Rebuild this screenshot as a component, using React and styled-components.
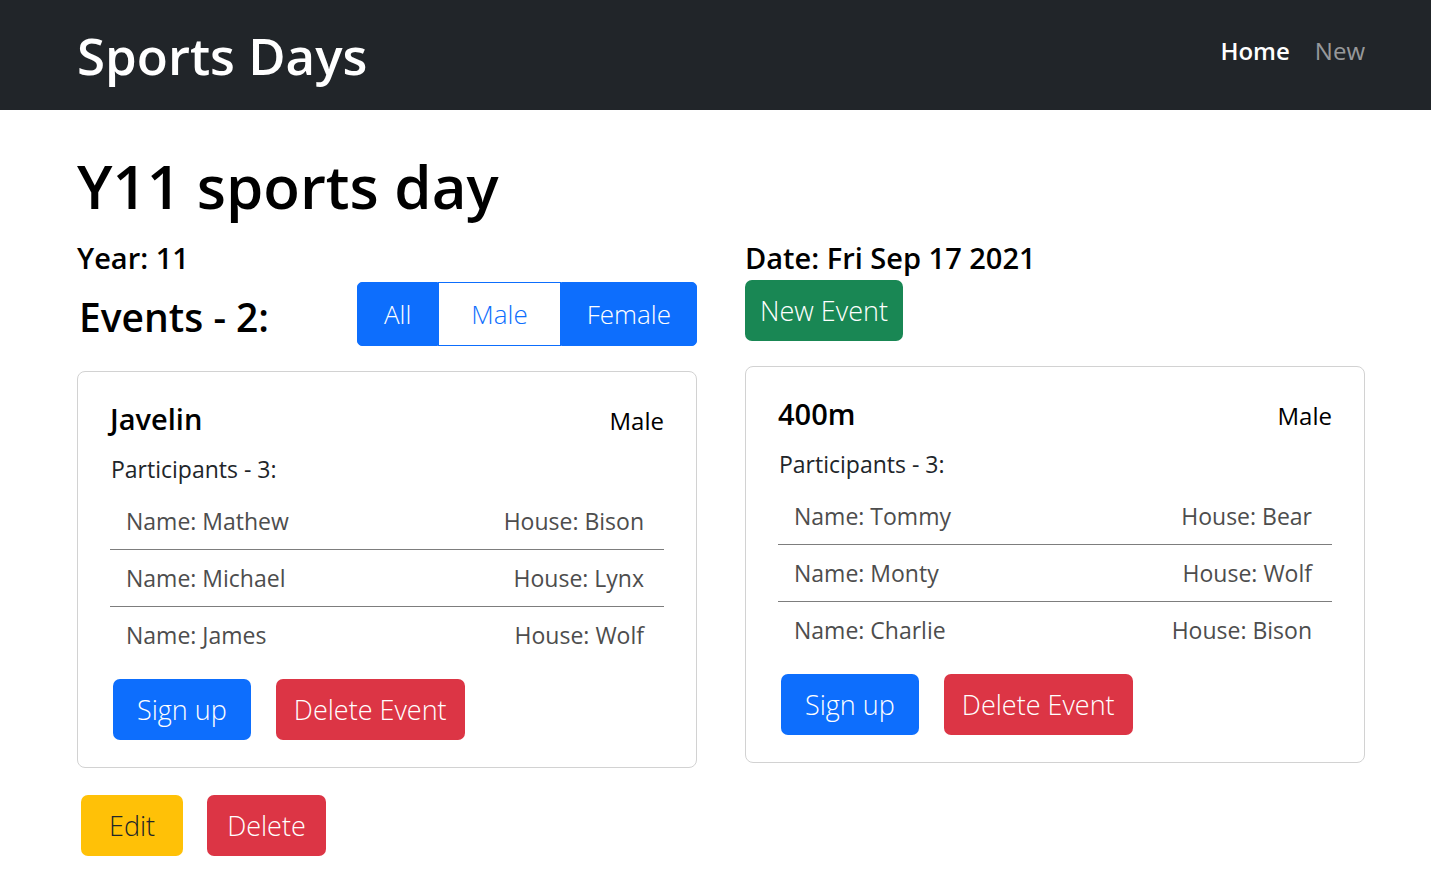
import React from 'react'
import styled, { createGlobalStyle } from 'styled-components'

const GlobalStyles = createGlobalStyle`
  * { box-sizing: border-box; }
  body {
    margin: 0;
    background: #ffffff;
    color: #000000;
    font-family: 'Open Sans', 'Noto Sans', sans-serif;
  }
`

const Navbar = styled.nav`
  background: #212529;
  height: 110px;
  display: flex;
  align-items: center;
  justify-content: space-between;
  padding: 0 66px 0 77px;
`

const Brand = styled.a`
  color: #ffffff;
  font-size: 51px;
  font-weight: 600;
  text-decoration: none;
`

const NavLinks = styled.div`
  display: flex;
  gap: 25px;
  margin-bottom: 10px;
`

const NavLink = styled.a`
  color: ${props => (props.active ? '#ffffff' : 'rgba(255, 255, 255, 0.55)')};
  font-size: 24px;
  font-weight: ${props => (props.active ? 600 : 400)};
  text-decoration: none;
`

const Main = styled.main`
  padding: 40px 66px 0 77px;
`

const Title = styled.h1`
  margin: 0 0 19px;
  font-size: 60px;
  font-weight: 600;
  line-height: 1.2;
`

const Columns = styled.div`
  display: grid;
  grid-template-columns: 1fr 1fr;
  column-gap: 48px;
`

const Column = styled.div`
  display: flex;
  flex-direction: column;
  align-items: flex-start;
`

const Info = styled.h5`
  margin: 0;
  font-size: 29px;
  font-weight: 600;
  line-height: 1.2;
`

const EventsRow = styled.div`
  align-self: stretch;
  display: flex;
  align-items: center;
  justify-content: space-between;
  margin-top: 6px;
`

const EventsHeading = styled.h3`
  margin: 0 0 0 2px;
  padding-top: 8px;
  font-size: 39px;
  font-weight: 600;
  line-height: 1.2;
`

const ButtonGroup = styled.div`
  display: flex;
`

const GroupButton = styled.button`
  height: 64px;
  padding: 0 ${props => props.pad}px;
  font-family: inherit;
  font-size: 26px;
  font-weight: 300;
  color: ${props => (props.active ? '#ffffff' : '#0d6efd')};
  background: ${props => (props.active ? '#0d6efd' : '#ffffff')};
  border: 1px solid #0d6efd;
  border-radius: 0;
  &:first-child { border-radius: 5px 0 0 5px; }
  &:last-child { border-radius: 0 5px 5px 0; }
`

const Button = styled.button`
  height: ${props => props.h || 61}px;
  padding: 0 ${props => props.pad || 22}px;
  font-family: inherit;
  font-size: ${props => props.size || 27}px;
  font-weight: 300;
  color: ${props => (props.dark ? '#212529' : '#ffffff')};
  background: ${props => props.color};
  border: none;
  border-radius: 7px;
`

const NewEventButton = styled(Button)`
  margin-top: 4px;
`

const Card = styled.div`
  align-self: stretch;
  margin-top: 25px;
  border: 1px solid #d2d2d2;
  border-radius: 8px;
  padding: 30px 32px 27px;
`

const CardHeader = styled.div`
  display: flex;
  justify-content: space-between;
  align-items: baseline;
`

const CardTitle = styled.h5`
  margin: 0;
  font-size: 29px;
  font-weight: 600;
  line-height: 1.2;
`

const Gender = styled.span`
  font-size: 24px;
`

const Participants = styled.p`
  margin: 16px 0 8px 1px;
  font-size: 23px;
  color: #212529;
`

const List = styled.ul`
  list-style: none;
  margin: 0;
  padding: 0;
`

const Item = styled.li`
  display: flex;
  justify-content: space-between;
  padding: 12px 20px 12px 16px;
  font-size: 23px;
  color: #4d4d4d;
  border-bottom: 1px solid #7d7d7d;
  &:last-child { border-bottom: none; }
`

const Actions = styled.div`
  display: flex;
  gap: 25px;
  margin-top: 16px;
  padding-left: 3px;
`

const Footer = styled.div`
  display: flex;
  gap: 24px;
  margin-top: 27px;
  padding-left: 4px;
`

const events = [
  {
    name: 'Javelin',
    gender: 'Male',
    people: [
      ['Mathew', 'Bison'],
      ['Michael', 'Lynx'],
      ['James', 'Wolf'],
    ],
  },
  {
    name: '400m',
    gender: 'Male',
    people: [
      ['Tommy', 'Bear'],
      ['Monty', 'Wolf'],
      ['Charlie', 'Bison'],
    ],
  },
]

const EventCard = ({ event }) => (
  <Card>
    <CardHeader>
      <CardTitle>{event.name}</CardTitle>
      <Gender>{event.gender}</Gender>
    </CardHeader>
    <Participants>Participants - {event.people.length}:</Participants>
    <List>
      {event.people.map(([name, house]) => (
        <Item key={name}>
          <span>Name: {name}</span>
          <span>House: {house}</span>
        </Item>
      ))}
    </List>
    <Actions>
      <Button color="#0d6efd" pad={24}>Sign up</Button>
      <Button color="#dc3545" pad={18}>Delete Event</Button>
    </Actions>
  </Card>
)

export default function App() {
  return (
    <>
      <GlobalStyles />
      <Navbar>
        <Brand href="#">Sports Days</Brand>
        <NavLinks>
          <NavLink href="#" active>Home</NavLink>
          <NavLink href="#">New</NavLink>
        </NavLinks>
      </Navbar>
      <Main>
        <Title>Y11 sports day</Title>
        <Columns>
          <Column>
            <Info>Year: 11</Info>
            <EventsRow>
              <EventsHeading>Events - 2:</EventsHeading>
              <ButtonGroup>
                <GroupButton active pad={26}>All</GroupButton>
                <GroupButton pad={32}>Male</GroupButton>
                <GroupButton active pad={25}>Female</GroupButton>
              </ButtonGroup>
            </EventsRow>
            <EventCard event={events[0]} />
          </Column>
          <Column>
            <Info>Date: Fri Sep 17 2021</Info>
            <NewEventButton color="#198754" pad={15}>New Event</NewEventButton>
            <EventCard event={events[1]} />
          </Column>
        </Columns>
        <Footer>
          <Button color="#ffc107" dark pad={28}>Edit</Button>
          <Button color="#dc3545" pad={20}>Delete</Button>
        </Footer>
      </Main>
    </>
  )
}
